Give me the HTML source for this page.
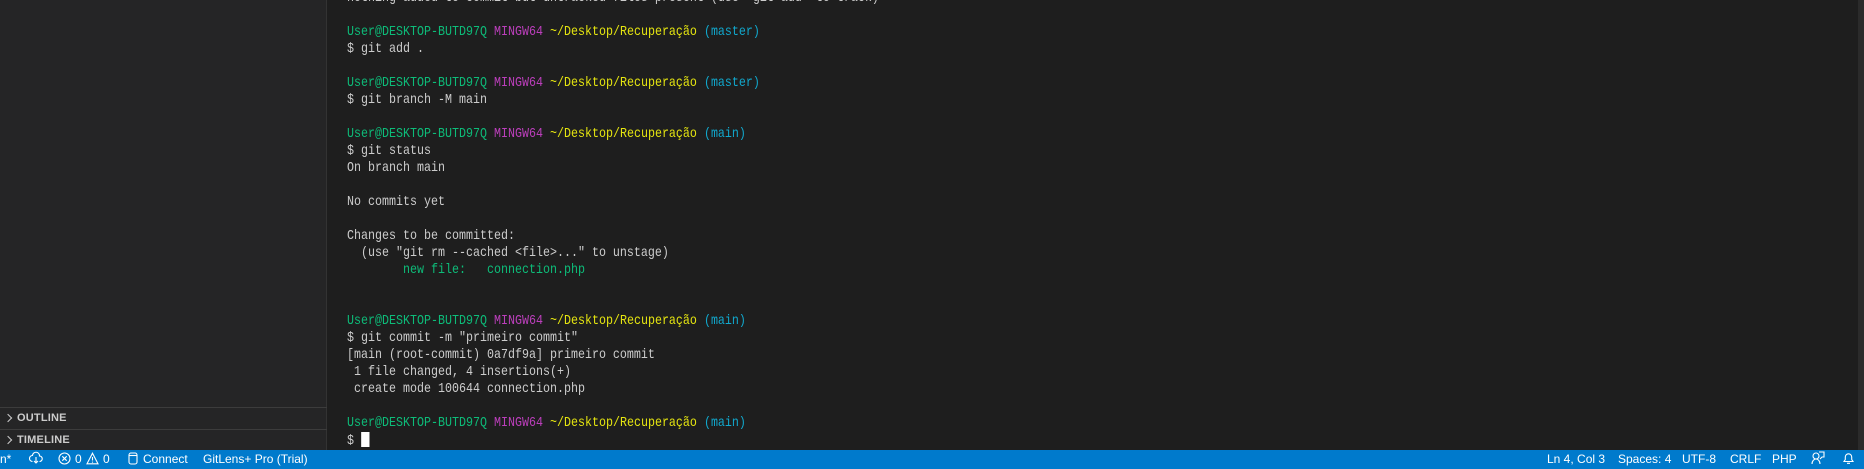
<!DOCTYPE html>
<html><head><meta charset="utf-8"><style>
*{margin:0;padding:0;box-sizing:border-box}
body{width:1864px;height:469px;background:#1e1e1e;overflow:hidden;position:relative;font-family:"Liberation Sans",sans-serif}
#side{position:absolute;left:0;top:0;width:327px;height:450px;background:#252526;border-right:1px solid #333}
.sep{position:absolute;left:0;width:327px;height:1px;background:#3c3c3c}
.sh{position:absolute;left:17px;font-size:11px;font-weight:bold;color:#cccccc;letter-spacing:0.2px}
.chev{position:absolute;left:5px;width:6px;height:6px;border-right:1.3px solid #ccc;border-bottom:1.3px solid #ccc;transform:rotate(-45deg)}
#term{position:absolute;left:347px;top:-10px;font-family:"Liberation Mono",monospace;font-size:14px;line-height:17px;color:#cccccc;white-space:pre;transform:scaleX(0.833);transform-origin:0 0}
.g{color:#0dbc79}.m{color:#bc3fbc}.y{color:#e5e510}.c{color:#11a8cd}
.cur{display:inline-block;width:10px;height:15px;background:#fff;vertical-align:-3px}
#scroll{position:absolute;left:1858px;top:0;width:6px;height:450px;background:#2b2b2b}
#sb{position:absolute;left:0;top:450px;width:1864px;height:19px;background:#007acc;color:#fff;font-size:12px;line-height:19px}
#sb span{position:absolute;top:0}
</style></head><body>
<div id="side">
<div class="sep" style="top:407px"></div>
<div class="chev" style="top:415px"></div><div class="sh" style="top:412px">OUTLINE</div>
<div class="sep" style="top:429px"></div>
<div class="chev" style="top:437px"></div><div class="sh" style="top:434px">TIMELINE</div>
</div>
<div id="term">nothing added to commit but untracked files present (use "git add" to track)

<span class="g">User@DESKTOP-BUTD97Q</span> <span class="m">MINGW64</span> <span class="y">~/Desktop/Recuperação</span> <span class="c">(master)</span>
$ git add .

<span class="g">User@DESKTOP-BUTD97Q</span> <span class="m">MINGW64</span> <span class="y">~/Desktop/Recuperação</span> <span class="c">(master)</span>
$ git branch -M main

<span class="g">User@DESKTOP-BUTD97Q</span> <span class="m">MINGW64</span> <span class="y">~/Desktop/Recuperação</span> <span class="c">(main)</span>
$ git status
On branch main

No commits yet

Changes to be committed:
  (use "git rm --cached &lt;file&gt;..." to unstage)
<span class="g">        new file:   connection.php</span>


<span class="g">User@DESKTOP-BUTD97Q</span> <span class="m">MINGW64</span> <span class="y">~/Desktop/Recuperação</span> <span class="c">(main)</span>
$ git commit -m "primeiro commit"
[main (root-commit) 0a7df9a] primeiro commit
 1 file changed, 4 insertions(+)
 create mode 100644 connection.php

<span class="g">User@DESKTOP-BUTD97Q</span> <span class="m">MINGW64</span> <span class="y">~/Desktop/Recuperação</span> <span class="c">(main)</span>
$ <span class="cur"></span></div>
<div id="scroll"></div>
<div id="sb">
<span style="left:0">n*</span>
<span style="left:29px"><svg width="14" height="14" viewBox="0 0 14 14" style="vertical-align:-2px"><path d="M3.5 10.5a3 3 0 0 1 0-6 3.5 3.5 0 0 1 7 0.5 2.5 2.5 0 0 1 0 5.5" fill="none" stroke="#fff" stroke-width="1.1"/><path d="M7 6v6M5 10l2 2 2-2" fill="none" stroke="#fff" stroke-width="1.1"/></svg></span>
<span style="left:58px"><svg width="13" height="13" viewBox="0 0 13 13" style="vertical-align:-2px"><circle cx="6.5" cy="6.5" r="5.5" fill="none" stroke="#fff" stroke-width="1.1"/><path d="M4.3 4.3l4.4 4.4M8.7 4.3l-4.4 4.4" stroke="#fff" stroke-width="1.1"/></svg></span>
<span style="left:75px">0</span>
<span style="left:86px"><svg width="13" height="13" viewBox="0 0 13 13" style="vertical-align:-2px"><path d="M6.5 1.2L12 11.8H1z" fill="none" stroke="#fff" stroke-width="1.1"/><path d="M6.5 5v3.5M6.5 9.6v1" stroke="#fff" stroke-width="1.1"/></svg></span>
<span style="left:103px">0</span>
<span style="left:128px"><svg width="10" height="13" viewBox="0 0 10 13" style="vertical-align:-2px"><rect x="1" y="1" width="8" height="11" rx="2" fill="none" stroke="#fff" stroke-width="1.1"/><path d="M1 3.5h8" stroke="#fff" stroke-width="1.1"/></svg></span>
<span style="left:143px">Connect</span>
<span style="left:203px">GitLens+ Pro (Trial)</span>
<span style="left:1547px">Ln 4, Col 3</span>
<span style="left:1618px">Spaces: 4</span>
<span style="left:1682px">UTF-8</span>
<span style="left:1730px">CRLF</span>
<span style="left:1772px">PHP</span>
<span style="left:1811px"><svg width="14" height="14" viewBox="0 0 14 14" style="vertical-align:-2px"><circle cx="5" cy="5" r="3" fill="none" stroke="#fff" stroke-width="1.1"/><path d="M1 13c0-3 2-5 4-5s4 2 4 5M8 1h5v5h-2l-2 2" fill="none" stroke="#fff" stroke-width="1.1"/></svg></span>
<span style="left:1842px"><svg width="13" height="14" viewBox="0 0 13 14" style="vertical-align:-2px"><path d="M2 10.5h9l-1.3-2V6a3.2 3.2 0 0 0-6.4 0v2.5zM5 12.3h3" fill="none" stroke="#fff" stroke-width="1.1"/></svg></span>
</div>
</body></html>
